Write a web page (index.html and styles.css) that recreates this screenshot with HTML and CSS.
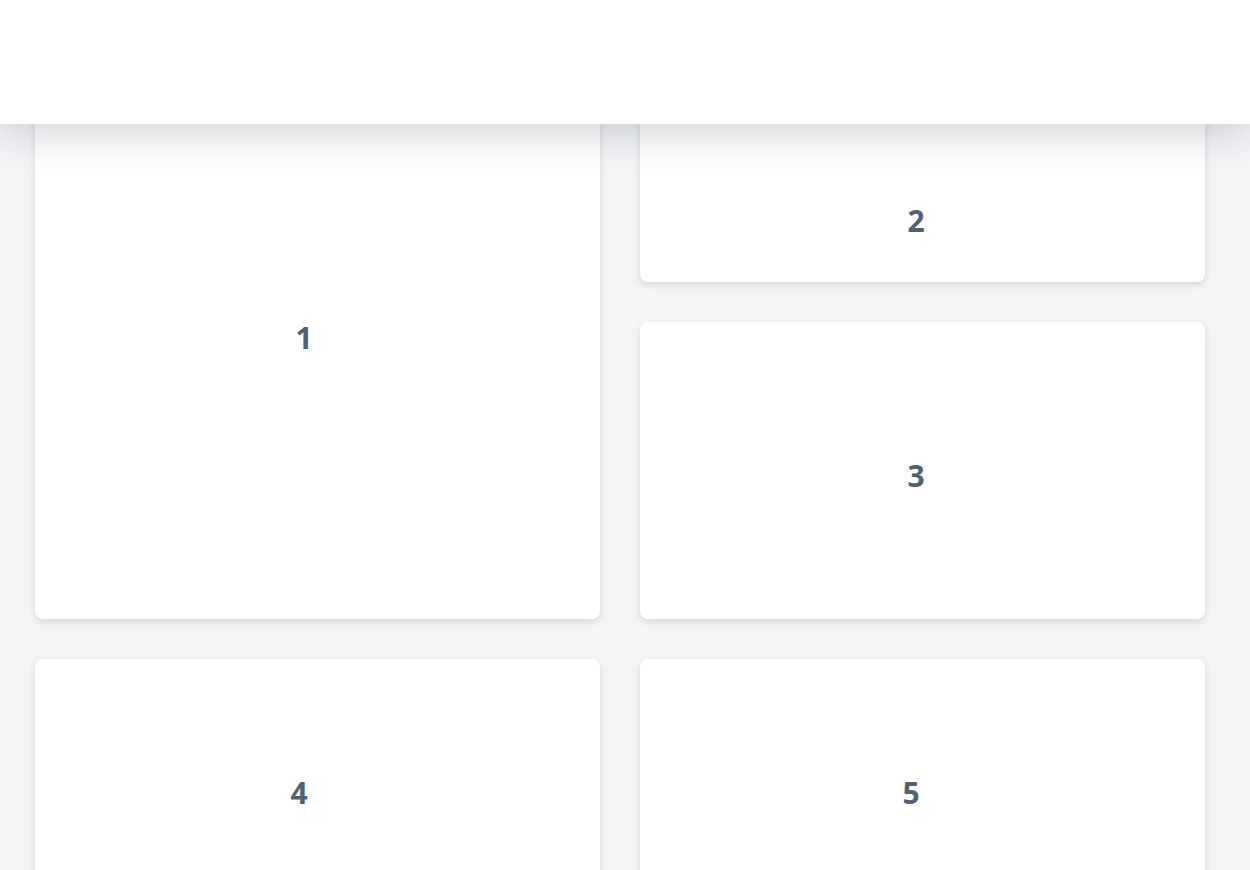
FILE: index.html
```html
<!DOCTYPE html>
<html lang="en">
<head>
<meta charset="utf-8">
<title>Grid</title>
<link rel="stylesheet" href="styles.css">
</head>
<body>
<header class="topbar"></header>
<main class="grid">
  <div class="card card-1"><span class="num">1</span></div>
  <div class="card card-2"><span class="num">2</span></div>
  <div class="card card-3"><span class="num">3</span></div>
  <div class="card card-4"><span class="num">4</span></div>
  <div class="card card-5"><span class="num">5</span></div>
</main>
</body>
</html>
```
FILE: styles.css
```css
html {
  overflow: hidden;
}
body {
  margin: 0;
  background: #f4f5f7;
  font-family: "Open Sans", "Liberation Sans", sans-serif;
}
.topbar {
  position: fixed;
  top: 0;
  left: 0;
  right: 0;
  height: 124px;
  background: #ffffff;
  box-shadow: 0 8px 40px rgba(20, 30, 50, 0.2);
  z-index: 10;
}
.grid {
  display: grid;
  grid-template-columns: 565px 565px;
  grid-template-rows: 198px 297px 256px;
  column-gap: 40px;
  row-gap: 40px;
  padding: 84px 0 0 35px;
}
.card {
  background: #ffffff;
  border-radius: 8px;
  box-shadow: 0 3px 7px rgba(30, 40, 60, 0.14);
  text-align: center;
  box-sizing: border-box;
}
.num {
  display: block;
  font-size: 30px;
  line-height: 40px;
  font-weight: 700;
  color: #4f6173;
}
.card-1 {
  grid-row: 1 / span 2;
  padding-top: 234px;
  padding-right: 27px;
}
.card-2 {
  padding-top: 117px;
  padding-right: 13px;
}
.card-3 {
  padding-top: 134px;
  padding-right: 13px;
}
.card-4 {
  padding-top: 114px;
  padding-right: 37px;
}
.card-5 {
  padding-top: 114px;
  padding-right: 23px;
}
```
